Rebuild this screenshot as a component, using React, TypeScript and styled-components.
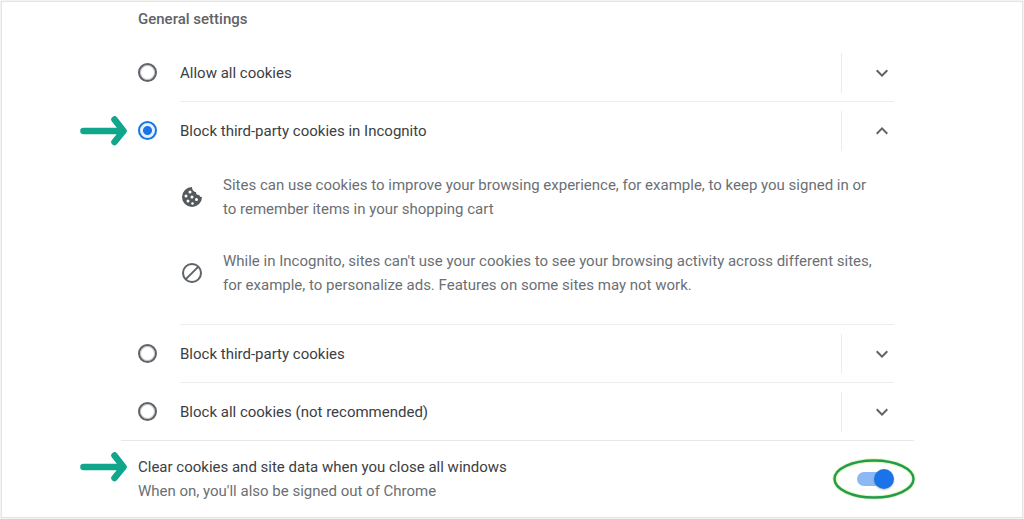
import React, { useState } from "react";
import styled, { createGlobalStyle } from "styled-components";

const GlobalStyle = createGlobalStyle`
  * { box-sizing: border-box; }
  body {
    margin: 0;
    background: #fff;
    font-family: Roboto, "Liberation Sans", sans-serif;
    font-size: 15px;
    line-height: 24px;
    color: #3c4043;
  }
`;

const Frame = styled.main`
  margin: 1px;
  min-height: calc(100vh - 2px);
  padding: 0 108px 12px 119px;
  border: 1px solid #e4e4e4;
  outline: 1px solid #f3f3f3;
`;

const Heading = styled.h2`
  margin: 0;
  padding: 5px 17px 13px;
  font-size: 15px;
  line-height: 24px;
  font-weight: 500;
  color: #5f6368;
`;

const Options = styled.div`
  padding: 0 20px 0 17px;
`;

const Option = styled.div`
  position: relative;
  display: grid;
  grid-template-columns: 20px 1fr;
  column-gap: 22px;
`;

const Radio = styled.input`
  appearance: none;
  width: 19px;
  height: 19px;
  margin: 19px 0 0;
  border: 2px solid #5f6368;
  border-radius: 50%;
  box-shadow: inset 0 0 0 1px #c9cbcd;
  &:checked {
    border-color: #1a73e8;
    box-shadow: none;
    background: radial-gradient(circle, #1a73e8 4px, #e4f1fe 5px);
  }
`;

const OptionBody = styled.div<{ $last?: boolean }>`
  border-bottom: ${(p) => (p.$last ? "0" : "1px solid #ececec")};
`;

const OptionHeader = styled.div`
  display: flex;
  align-items: center;
  justify-content: space-between;
  height: 57px;
`;

const ExpandButton = styled.button`
  display: flex;
  align-items: center;
  height: 40px;
  padding: 0 0 0 28px;
  border: 0;
  border-left: 1px solid #ececec;
  background: none;
  color: #5f6368;
`;

const Details = styled.ul`
  display: grid;
  row-gap: 28px;
  margin: 0;
  padding: 14px 16px 27px 0;
  list-style: none;
`;

const Detail = styled.li`
  display: grid;
  grid-template-columns: 24px 1fr;
  column-gap: 19px;
  align-items: center;
  color: #6b6f74;
`;

const ClearRow = styled.div`
  position: relative;
  display: flex;
  align-items: center;
  justify-content: space-between;
  padding: 14px 21px 0 17px;
  border-top: 1px solid #e8e8e8;
`;

const Note = styled.div`
  color: #6b6f74;
`;

const SwitchHolder = styled.div`
  position: relative;
  display: flex;
`;

const Switch = styled.input`
  appearance: none;
  position: relative;
  width: 36px;
  height: 14px;
  margin: 0;
  border-radius: 7px;
  background: #c4c7ca;
  &::before {
    content: "";
    position: absolute;
    top: -3px;
    left: 0;
    width: 20px;
    height: 20px;
    border-radius: 50%;
    background: #fff;
    box-shadow: 0 1px 2px rgba(60, 64, 67, 0.3);
  }
  &:checked { background: #8cb8f3; }
  &:checked::before { left: 17px; background: #1a73e8; }
`;

const Ring = styled.svg`
  position: absolute;
  top: -14px;
  left: -25px;
  pointer-events: none;
`;

const Pointer = styled.svg<{ $top: number }>`
  position: absolute;
  top: ${(p) => p.$top}px;
  right: calc(100% + 10px);
`;

const PointerAnchor = styled.div`
  position: absolute;
  top: 0;
  left: 0;
`;

const ClearAnchor = styled(PointerAnchor)`
  left: 17px;
`;

const Arrow = ({ top }: { top: number }) => (
  <Pointer $top={top} width="48" height="32" viewBox="0 0 48 32" aria-hidden="true">
    <path d="M3.500 16H42M34.500 4.500L43.500 16L34.500 27" fill="none" stroke="#0fa68c" strokeWidth="6.600" strokeLinecap="round" strokeLinejoin="round" />
  </Pointer>
);

const Chevron = ({ up }: { up: boolean }) => (
  <svg width="24" height="24" viewBox="0 0 24 24" fill="currentColor" aria-hidden="true">
    <path d={up ? "M12 8l-6 6 1.410 1.410L12 10.830l4.590 4.580L18 14z" : "M16.590 8.590L12 13.170 7.410 8.590 6 10l6 6 6-6z"} />
  </svg>
);

const CookieIcon = () => (
  <svg width="24" height="24" viewBox="0 0 24 24" aria-hidden="true">
    <path d="M12 2A10 10 0 1 0 22 12C21 12.300 19.500 11.500 19.200 10C17 10.200 15.800 8.800 16 7C13.500 7 12 4.500 12 2Z" fill="#55595e" />
    <g fill="#fff">
      <circle cx="10" cy="7" r="1.500" />
      <circle cx="6" cy="11" r="1.500" />
      <circle cx="12" cy="12" r="1.500" />
      <circle cx="8" cy="16" r="1.500" />
      <circle cx="16.500" cy="14.500" r="1.500" />
      <circle cx="12.500" cy="18.500" r="1.300" />
    </g>
  </svg>
);

const BlockIcon = () => (
  <svg width="24" height="24" viewBox="0 0 24 24" fill="none" stroke="#5f6368" strokeWidth="2" aria-hidden="true">
    <circle cx="12" cy="12" r="9" />
    <path d="M18.400 5.600L5.600 18.400" />
  </svg>
);

const choices = [
  { id: "allow", label: "Allow all cookies" },
  { id: "incognito", label: "Block third-party cookies in Incognito" },
  { id: "third-party", label: "Block third-party cookies" },
  { id: "all", label: "Block all cookies (not recommended)" },
];

export default function App() {
  const [selected, setSelected] = useState("incognito");
  const [expanded, setExpanded] = useState("incognito");
  const [clear, setClear] = useState(true);

  return (
    <>
      <GlobalStyle />
      <Frame>
        <Heading id="general">General settings</Heading>
        <Options role="radiogroup" aria-labelledby="general">
          {choices.map(({ id, label }, i) => (
            <Option key={id}>
              {id === "incognito" && (
                <PointerAnchor>
                  <Arrow top={13} />
                </PointerAnchor>
              )}
              <Radio type="radio" name="cookies" id={id} checked={selected === id} onChange={() => setSelected(id)} />
              <OptionBody $last={i === choices.length - 1}>
                <OptionHeader>
                  <label htmlFor={id}>{label}</label>
                  <ExpandButton
                    type="button"
                    aria-label={`Details: ${label}`}
                    aria-expanded={expanded === id}
                    onClick={() => setExpanded(expanded === id ? "" : id)}
                  >
                    <Chevron up={expanded === id} />
                  </ExpandButton>
                </OptionHeader>
                {id === "incognito" && expanded === id && (
                  <Details>
                    <Detail>
                      <CookieIcon />
                      <span>
                        Sites can use cookies to improve your browsing experience, for example, to keep you signed in or
                        to remember items in your shopping cart
                      </span>
                    </Detail>
                    <Detail>
                      <BlockIcon />
                      <span>
                        While in Incognito, sites can't use your cookies to see your browsing activity across different
                        sites, for example, to personalize ads. Features on some sites may not work.
                      </span>
                    </Detail>
                  </Details>
                )}
              </OptionBody>
            </Option>
          ))}
        </Options>
        <ClearRow>
          <ClearAnchor>
            <Arrow top={10} />
          </ClearAnchor>
          <div>
            <label htmlFor="clear">Clear cookies and site data when you close all windows</label>
            <Note id="clear-note">When on, you'll also be signed out of Chrome</Note>
          </div>
          <SwitchHolder>
            <Switch
              type="checkbox"
              role="switch"
              id="clear"
              aria-describedby="clear-note"
              checked={clear}
              onChange={() => setClear(!clear)}
            />
            <Ring width="84" height="42" viewBox="0 0 84 42" aria-hidden="true">
              <ellipse cx="42" cy="21" rx="39.500" ry="18.500" fill="none" stroke="#e3f7b8" strokeWidth="4.500" />
              <ellipse cx="42" cy="21" rx="39.500" ry="18.500" fill="none" stroke="#229a52" strokeWidth="2.400" />
            </Ring>
          </SwitchHolder>
        </ClearRow>
      </Frame>
    </>
  );
}
